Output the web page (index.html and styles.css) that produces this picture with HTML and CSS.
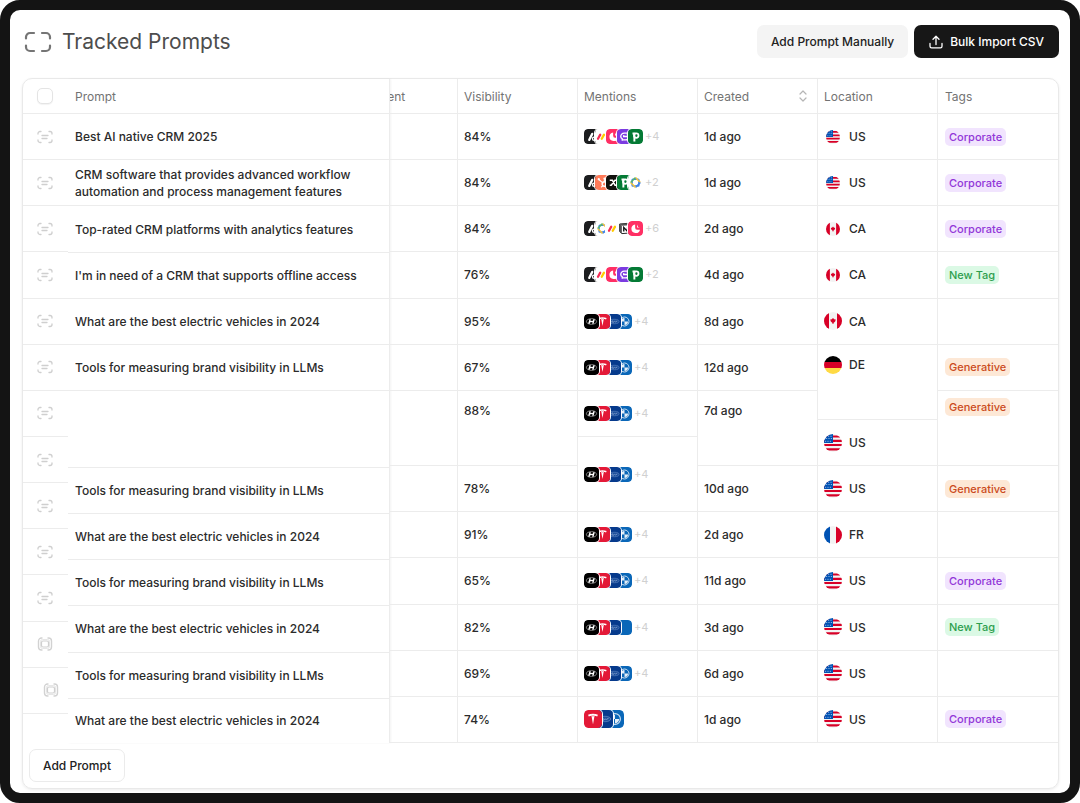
FILE: index.html
```html
<!DOCTYPE html>
<html lang="en">
<head>
  <meta charset="utf-8">
  <meta name="viewport" content="width=device-width, initial-scale=1">
  <title>Tracked Prompts</title>
  <link rel="stylesheet" href="styles.css">
</head>
<body>
  <svg class="sprite" aria-hidden="true">
    <defs>
      <clipPath id="tile"><rect width="20" height="20" rx="5"/></clipPath>
      <clipPath id="round"><circle cx="9" cy="9" r="9"/></clipPath>
    </defs>

    <!-- row icons -->
    <symbol id="scan" viewBox="0 0 16 14">
      <path d="M1 4V3.500a2 2 0 0 1 2-2h1M12 1.500h1a2 2 0 0 1 2 2V4M15 10v.5a2 2 0 0 1-2 2h-1M4 12.500H3a2 2 0 0 1-2-2V10M5 5.500h6M5 8.500h5" fill="none" stroke="#cfcfcf" stroke-width="1.300" stroke-linecap="round"/>
    </symbol>
    <symbol id="focus" viewBox="0 0 16 14">
      <path d="M5 1H4.500A3 3 0 0 0 1.500 4v6a3 3 0 0 0 3 3H5M11 1h.5a3 3 0 0 1 3 3v6a3 3 0 0 1-3 3H11" fill="none" stroke="#d2d2d2" stroke-width="1.400" stroke-linecap="round"/>
      <path d="M5.500 2.500h5a2 2 0 0 1 2 2v5a2 2 0 0 1-2 2h-5a2 2 0 0 1-2-2v-5a2 2 0 0 1 2-2z" fill="none" stroke="#e6e6e6" stroke-width="1"/>
      <rect x="4.500" y="4" width="7" height="6" rx="1.500" fill="none" stroke="#cfcfcf" stroke-width="1.200"/>
    </symbol>

    <!-- brands -->
    <symbol id="attio" viewBox="0 0 20 20">
      <g clip-path="url(#tile)">
        <rect width="20" height="20" fill="#1c1d1f"/>
        <path d="M7 14.500L11 6.500" stroke="#fff" stroke-width="3" stroke-linecap="round"/>
        <circle cx="13.500" cy="13" r="2.200" fill="none" stroke="#fff" stroke-width="1.800"/>
      </g>
    </symbol>
    <symbol id="monday" viewBox="0 0 20 20">
      <rect width="20" height="20" rx="5" fill="#fff"/>
      <g stroke-width="3" stroke-linecap="round">
        <path d="M4 13l3-5.500" stroke="#f62b54"/>
        <path d="M9 13l3-5.500" stroke="#fc0"/>
        <path d="M15.500 12.500v.01" stroke="#00ca72" stroke-width="3.600"/>
      </g>
    </symbol>
    <symbol id="copper" viewBox="0 0 20 20">
      <rect width="20" height="20" rx="5" fill="#ff2f64"/>
      <path d="M9.500 4.500A5.800 5.800 0 1 0 16 11.500h-3a3 3 0 0 1-3.500-3z" fill="#fff"/>
      <path d="M12 4.800a4.500 4.500 0 0 0 3.800 3.900H12z" fill="#fff"/>
    </symbol>
    <symbol id="purple" viewBox="0 0 20 20">
      <rect width="20" height="20" rx="5" fill="#7b3be0"/>
      <path d="M7 15.500V13a3.500 3.500 0 0 1-2-3 4.500 4.500 0 0 1 4.500-4.500H15l-1.500 3M8 10h6.500v1.500A3 3 0 0 1 11.500 14.500H7" fill="none" stroke="#fff" stroke-width="1.800"/>
      <circle cx="9" cy="9" r="1" fill="#fff"/>
    </symbol>
    <symbol id="pipedrive" viewBox="0 0 20 20">
      <rect width="20" height="20" rx="5" fill="#047a35"/>
      <path d="M6 6h2.500v10.500" fill="none" stroke="#fff" stroke-width="2.600"/>
      <circle cx="11" cy="8.800" r="3" fill="none" stroke="#fff" stroke-width="2.400"/>
    </symbol>
    <symbol id="hubspot" viewBox="0 0 20 20">
      <rect width="20" height="20" rx="5" fill="#ff7a59"/>
      <circle cx="12.500" cy="12" r="3" fill="none" stroke="#fff" stroke-width="1.800"/>
      <path d="M12.500 9V5M10.500 10.500L5 6M10.500 14.500L8.500 16" stroke="#fff" stroke-width="1.500" stroke-linecap="round"/>
      <circle cx="5" cy="5.500" r="1.500" fill="#fff"/>
      <circle cx="12.500" cy="4.500" r="1.300" fill="#fff"/>
    </symbol>
    <symbol id="zendesk" viewBox="0 0 20 20">
      <rect width="20" height="20" rx="5" fill="#11110d"/>
      <path d="M5 7h3.500l3.500 6.500h3M14 7h-2L7 13.500H5" fill="none" stroke="#fff" stroke-width="2"/>
    </symbol>
    <symbol id="knot" viewBox="0 0 20 20">
      <rect width="20" height="20" rx="5" fill="#fff"/>
      <g fill="none" stroke-width="2">
        <rect x="5.500" y="5.500" width="9" height="9" rx="1" stroke="#3f83e8"/>
        <path d="M10 3.500L16.500 10" stroke="#f3c33c"/>
        <path d="M16.500 10L10 16.500" stroke="#3f83e8"/>
        <path d="M10 16.500L3.500 10" stroke="#f3c33c"/>
        <path d="M3.500 10L10 3.500" stroke="#55b46f"/>
      </g>
    </symbol>
    <symbol id="notion" viewBox="0 0 20 20">
      <rect width="20" height="20" rx="5" fill="#fff"/>
      <path d="M3.500 4l10-.8L17 5.500V16l-10.500.8L3.500 14z" fill="#fff" stroke="#222" stroke-width="1.300"/>
      <path d="M3.500 4l10-.8L17 5.500l-10 .8zM3.500 4v10l3 2.800V6.300z" fill="#555"/>
      <path d="M9 14V8.500l5 5.500V8.500" fill="none" stroke="#111" stroke-width="1.800"/>
    </symbol>
    <symbol id="hyundai" viewBox="0 0 20 20">
      <rect width="20" height="20" rx="5" fill="#000"/>
      <ellipse cx="10" cy="10" rx="6.800" ry="3.800" fill="none" stroke="#aaa"/>
      <path d="M8.300 7L6.500 13M13.500 7l-1.800 6M7.500 10.500l5-1" stroke="#fff" stroke-width="1.900"/>
    </symbol>
    <symbol id="tesla" viewBox="0 0 20 20">
      <rect width="20" height="20" rx="5" fill="#e31937"/>
      <path d="M4.500 5.200c3.600-1.200 7.400-1.200 11 0l-.8 2c-1-.5-2-.7-3-.7L10 16 8.300 6.500c-1 0-2 .2-3 .7z" fill="#fff"/>
      <path d="M8.500 5.800L10 7l1.500-1.200" fill="none" stroke="#e31937" stroke-width=".6"/>
    </symbol>
    <symbol id="ford" viewBox="0 0 20 20">
      <rect width="20" height="20" rx="5" fill="#063a8c"/>
      <ellipse cx="11" cy="10" rx="6.500" ry="3" fill="#1c4f9c" stroke="#6186c0" stroke-width=".8"/>
      <path d="M7 11c1.500-2.500 2.500-2.500 2-.5s1.500 0 2-.5 1 1.200 2 .3l2-1" fill="none" stroke="#9db5da" stroke-width=".9"/>
    </symbol>
    <symbol id="bmw" viewBox="0 0 20 20">
      <rect width="20" height="20" rx="5" fill="#0a67b8"/>
      <circle cx="10" cy="10" r="6" fill="#0a67b8" stroke="#cfe0f2" stroke-width="1.300"/>
      <path d="M10 10V5.300A4.700 4.700 0 0 0 5.300 10zM10 10v4.700a4.700 4.700 0 0 0 4.700-4.700z" fill="#e3eef8"/>
    </symbol>
    <symbol id="plain" viewBox="0 0 20 20">
      <rect width="20" height="20" rx="5" fill="#0a67b8"/>
    </symbol>

    <!-- flags -->
    <symbol id="US" viewBox="0 0 18 18">
      <g clip-path="url(#round)">
        <rect width="18" height="18" fill="#f3f3f3"/>
        <path d="M0 2.500h18M0 6.800h18M0 11h18M0 15.300h18" stroke="#d80027" stroke-width="2.200"/>
        <path d="M0 0h9v9H0z" fill="#0052b4"/>
        <path d="M2 4.500h6M1 7.300h7M4 2.300h4" stroke="#a9c6ea" stroke-width=".8" stroke-dasharray="1.200 1.200"/>
      </g>
    </symbol>
    <symbol id="CA" viewBox="0 0 18 18">
      <g clip-path="url(#round)">
        <rect width="18" height="18" fill="#f3f3f3"/>
        <path d="M0 0h5v18H0zM13 0h5v18h-5z" fill="#d80027"/>
        <path d="M9 5.800l1 1.400 1.800.4-.6 2-1.700 1.500v1h-1v-1L6.800 9.600l-.6-2L8 7.200z" fill="#d80027"/>
      </g>
    </symbol>
    <symbol id="DE" viewBox="0 0 18 18">
      <g clip-path="url(#round)">
        <rect width="18" height="6" fill="#000"/>
        <rect y="6" width="18" height="6" fill="#d80027"/>
        <rect y="12" width="18" height="6" fill="#ffda44"/>
      </g>
    </symbol>
    <symbol id="FR" viewBox="0 0 18 18">
      <g clip-path="url(#round)">
        <rect width="18" height="18" fill="#f3f3f3"/>
        <rect width="6" height="18" fill="#0052b4"/>
        <rect x="12" width="6" height="18" fill="#d80027"/>
      </g>
    </symbol>
  </svg>

  <main class="frame">
    <header class="topbar">
      <svg class="title-icon" viewBox="0 0 28 22" aria-hidden="true">
        <path d="M2 7.500V6a4 4 0 0 1 4-4h4M18 2h4a4 4 0 0 1 4 4v1.500M26 14.500V16a4 4 0 0 1-4 4h-4M10 20H6a4 4 0 0 1-4-4v-1.500" fill="none" stroke="#757575" stroke-width="2.200" stroke-linecap="round"/>
      </svg>
      <h1>Tracked Prompts</h1>
      <button class="btn btn-soft" type="button">Add Prompt Manually</button>
      <button class="btn btn-dark" type="button">
        <svg width="14" height="14" viewBox="0 0 14 14" aria-hidden="true">
          <path d="M7 9.500V1.500M4 4.200l3-2.900 3 2.900M1 8.500v2.700a1.600 1.600 0 0 0 1.600 1.600h8.800a1.600 1.600 0 0 0 1.600-1.600V8.500" fill="none" stroke="#fff" stroke-width="1.300" stroke-linecap="round" stroke-linejoin="round"/>
        </svg>
        Bulk Import CSV
      </button>
    </header>

    <section class="card">
      <div class="columns">
        <table class="col col-select">
          <thead><tr><th><input type="checkbox" aria-label="Select all prompts"></th></tr></thead>
          <tbody id="select"></tbody>
        </table>
        <table class="col col-prompt">
          <thead><tr><th>Prompt</th></tr></thead>
          <tbody id="prompt"></tbody>
        </table>
        <!-- scrolled half way under the prompt column -->
        <div class="clip">
          <table class="col">
            <thead><tr><th>Sentiment</th></tr></thead>
            <tbody id="sentiment"></tbody>
          </table>
        </div>
        <table class="col">
          <thead><tr><th>Visibility</th></tr></thead>
          <tbody id="visibility"></tbody>
        </table>
        <table class="col">
          <thead><tr><th>Mentions</th></tr></thead>
          <tbody id="mentions"></tbody>
        </table>
        <table class="col">
          <thead>
            <tr><th>
              <span class="sortable">Created
                <svg width="8" height="12" viewBox="0 0 8 12" aria-hidden="true">
                  <path d="M1 4l3-3 3 3M1 8l3 3 3-3" fill="none" stroke="#b5b5b5" stroke-width="1.200" stroke-linecap="round" stroke-linejoin="round"/>
                </svg>
              </span>
            </th></tr>
          </thead>
          <tbody id="created"></tbody>
        </table>
        <table class="col">
          <thead><tr><th>Location</th></tr></thead>
          <tbody id="location"></tbody>
        </table>
        <table class="col">
          <thead><tr><th>Tags</th></tr></thead>
          <tbody id="tags"></tbody>
        </table>
      </div>
      <footer class="card-footer">
        <button class="btn btn-outline" type="button">Add Prompt</button>
      </footer>
    </section>
  </main>

  <script>
    var TOOLS = 'Tools for measuring brand visibility in LLMs';
    var CARS = 'What are the best electric vehicles in 2024';
    var brands = ['hyundai', 'tesla', 'ford', 'bmw'];

    // each column keeps its own rows; classes maps a row index to its class
    function fill (id, values, render, classes) {
      document.getElementById(id).innerHTML = values.map(function (v, i) {
        var cls = classes && classes[i] ? ' class="' + classes[i] + '"' : '';
        return '<tr' + cls + '><td>' + (v ? render(v, i) : '') + '</td></tr>';
      }).join('');
    }

    function use (cls, name) {
      return '<svg class="' + cls + '" aria-hidden="true"><use href="#' + name + '"/></svg>';
    }

    function text (v) {
      return v;
    }

    function mention (m) {
      var logos = m.logos.map(function (name) {
        return use('logo', name);
      }).join('');
      var more = m.more ? '<span class="more">+' + m.more + '</span>' : '';
      return '<div class="stack ' + (m.cls || '') + '">' + logos + more + '</div>';
    }

    function flag (code, i) {
      return '<div class="place"><span class="flag-slot">' + use(i < 4 ? 'flag flag-small' : 'flag', code) + '</span>' + code + '</div>';
    }

    function tag (name) {
      return '<span class="tag ' + name.split(' ')[0].toLowerCase() + '">' + name + '</span>';
    }

    function cars () {
      return { logos: brands, more: 4, cls: 'under' };
    }

    fill('select', ['scan', 'scan', 'scan', 'scan', 'scan', 'scan', 'scan', 'scan', 'scan', 'scan', 'scan', 'focus', 'focus', ''], function (name) {
      return use('row-icon', name);
    }, { 12: 'indent', 13: 'rest' });

    fill('prompt', [
      'Best AI native CRM 2025',
      'CRM software that provides advanced workflow automation and process management features',
      'Top-rated CRM platforms with analytics features',
      'I\'m in need of a CRM that supports offline access',
      CARS, TOOLS, '', TOOLS, CARS, TOOLS, CARS, TOOLS, CARS
    ], text, { 6: 'tall' });

    fill('sentiment', ['', '', '', '', '', '', '', '', '', '', '', '', ''], text, { 6: 'tall' });

    fill('visibility', ['84%', '84%', '84%', '76%', '95%', '67%', '88%', '78%', '91%', '65%', '82%', '69%', '74%'], text, { 6: 'tall' });

    fill('mentions', [
      { logos: ['attio', 'monday', 'copper', 'purple', 'pipedrive'], more: 4 },
      { logos: ['attio', 'hubspot', 'zendesk', 'pipedrive', 'knot'], more: 2 },
      { logos: ['attio', 'knot', 'monday', 'notion', 'copper'], more: 6 },
      { logos: ['attio', 'monday', 'copper', 'purple', 'pipedrive'], more: 2 },
      cars(), cars(), cars(), cars(), cars(), cars(),
      { logos: ['hyundai', 'tesla', 'ford', 'plain'], more: 4, cls: 'under' },
      cars(),
      { logos: ['tesla', 'ford', 'bmw'], cls: 'under large' }
    ], mention, { 7: 'tall middle' });

    fill('created', ['1d ago', '1d ago', '2d ago', '4d ago', '8d ago', '12d ago', '7d ago', '10d ago', '2d ago', '11d ago', '3d ago', '6d ago', '1d ago'], text, { 6: 'tall' });

    fill('location', ['US', 'US', 'CA', 'CA', 'CA', 'DE', 'US', 'US', 'FR', 'US', 'US', 'US', 'US'], flag, { 5: 'tall' });

    fill('tags', ['Corporate', 'Corporate', 'Corporate', 'New Tag', '', 'Generative', 'Generative', 'Generative', '', 'Corporate', 'New Tag', '', 'Corporate'], tag, { 6: 'tall tight' });
  </script>
</body>
</html>
```
FILE: styles.css
```css
* {
  box-sizing: border-box;
}

body {
  margin: 0;
  background: #fff;
  color: #2b2b2b;
  font: 500 12px/17px Inter, "Liberation Sans", sans-serif;
}

.sprite {
  position: absolute;
  width: 0;
  height: 0;
}

.frame {
  display: flex;
  flex-direction: column;
  min-height: 100vh;
  padding: 15px 11px 4px 12px;
  border: 10px solid #141414;
  border-radius: 20px;
}

/* top bar */

.topbar {
  display: flex;
  align-items: center;
  gap: 6px;
  margin-bottom: 20px;
  padding-left: 2px;
}

.title-icon {
  width: 28px;
  height: 22px;
}

h1 {
  flex: 1;
  margin: 0 0 0 4px;
  color: #4d4d4d;
  font-size: 21px;
  font-weight: 400;
  line-height: 28px;
}

.btn {
  display: flex;
  align-items: center;
  gap: 7px;
  height: 33px;
  padding: 0 14px;
  border: 0;
  border-radius: 7px;
  font: inherit;
  color: #222;
  white-space: nowrap;
}

.btn-soft {
  background: #f4f4f4;
}

.btn-dark {
  padding: 0 15px;
  background: #171717;
  color: #fff;
}

.btn-outline {
  padding: 0 13px;
  border: 1px solid #ebebeb;
  background: #fff;
}

/* table card */

.card {
  display: flex;
  flex: 1;
  flex-direction: column;
  border: 1px solid #e9e9e9;
  border-radius: 10px;
  box-shadow: 0 1px 3px rgba(0, 0, 0, 0.08);
}

.columns {
  display: grid;
  flex: 1;
  grid-template-columns: 45px minmax(0, 161fr) 68px repeat(5, minmax(0, 60fr));
}

.card-footer {
  padding: 6px;
}

.col {
  width: 100%;
  border-right: 1px solid #ececec;
  border-spacing: 0;
}

.col:last-child {
  border-right: 0;
}

.col-select {
  border-right: 0;
}

.col-prompt {
  box-shadow: 1px 0 2px rgba(0, 0, 0, 0.05);
}

.clip {
  display: flex;
  justify-content: flex-end;
  overflow: hidden;
}

.clip .col {
  flex: none;
  width: 117px;
  border-right: 1px solid #ececec;
}

th,
td {
  height: 46px;
  padding: 0 6px;
  border-bottom: 1px solid #ececec;
  text-align: left;
}

th {
  height: 35px;
  color: #737373;
  font-weight: 400;
}

.col-select th,
.col-select td {
  padding: 0 0 0 14px;
}

.col-prompt th,
.col-prompt td,
.col:last-child th,
.col:last-child td {
  padding: 0 7px;
}

.col-prompt tr:last-child td,
.col-select .rest td {
  border-bottom: 0;
}

.col-select .rest td {
  height: 29px;
}

.tall td {
  height: 75px;
  padding-top: 11px;
  vertical-align: top;
}

.col-prompt .tall td {
  height: 76px;
}

.col-prompt tbody tr:last-child td {
  height: 44px;
}

.col:last-child .tall.tight td {
  padding-top: 7px;
}

.tall.middle td {
  padding-top: 0;
  vertical-align: middle;
}

input[type="checkbox"] {
  display: block;
  appearance: none;
  width: 16px;
  height: 16px;
  margin: 0;
  border: 1px solid #e4e4e4;
  border-radius: 5px;
  background: #fff;
  box-shadow: 0 1px 1px rgba(0, 0, 0, 0.05);
}

.row-icon {
  display: block;
  width: 16px;
  height: 14px;
}

.col-select .indent td {
  padding-left: 20px;
}

.sortable {
  display: flex;
  align-items: center;
  justify-content: space-between;
  padding-right: 4px;
}

/* mentions */

.stack {
  display: flex;
  align-items: center;
}

.logo {
  flex: none;
  width: 15px;
  height: 15px;
  margin-right: -4px;
  border-radius: 4px;
  box-shadow: 0 0 0 1px #fff;
}

/* the first logo lies on top */
.under .logo {
  position: relative;
}

.under .logo:nth-child(1) { z-index: 4; }
.under .logo:nth-child(2) { z-index: 3; }
.under .logo:nth-child(3) { z-index: 2; }
.under .logo:nth-child(4) { z-index: 1; }

.large .logo {
  width: 18px;
  height: 18px;
  margin-right: -7px;
}

.more {
  margin-left: 6px;
  color: #d0d0d0;
  font-size: 11px;
  font-weight: 400;
}

/* location */

.place {
  display: flex;
  align-items: center;
  gap: 7px;
}

.flag-slot {
  display: flex;
  justify-content: center;
  width: 18px;
}

.flag {
  width: 18px;
  height: 18px;
}

.flag-small {
  width: 14px;
  height: 14px;
}

/* tags */

.tag {
  display: inline-block;
  padding: 0 4px;
  border-radius: 5px;
  font-size: 11px;
  line-height: 18px;
}

.corporate {
  background: #f1e4fe;
  color: #9137d8;
}

.new {
  background: #dbf9e5;
  color: #2d9e4d;
}

.generative {
  background: #fde8d6;
  color: #cb4a20;
}
```
